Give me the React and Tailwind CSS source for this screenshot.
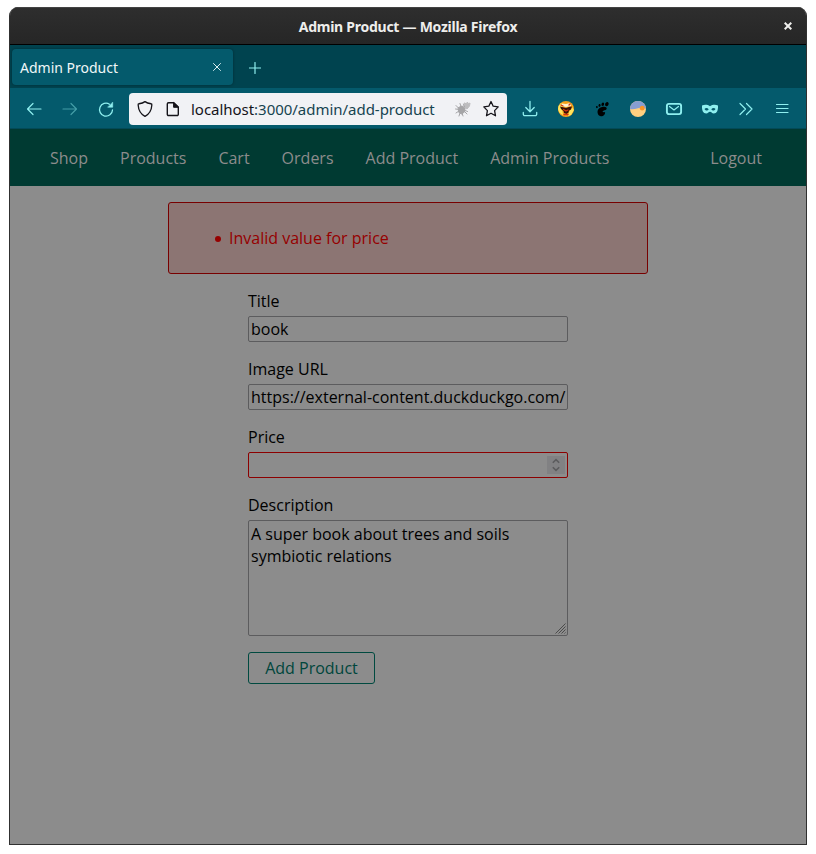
const stroke = { fill: 'none', stroke: 'currentColor', strokeLinecap: 'round', strokeLinejoin: 'round' };

function Icon({ children, className = '', size = 18 }) {
  return (
    <svg width={size} height={size} viewBox={`0 0 ${size} ${size}`} className={`shrink-0 ${className}`} {...stroke} strokeWidth="1.2">
      {children}
    </svg>
  );
}

function TitleBar() {
  return (
    <div className="relative flex h-[38px] items-center justify-center border-b border-black bg-gradient-to-b from-[#2e2e2e] to-[#262626] pt-[2px] shadow-[inset_0_1px_0_#434343]">
      <span className="text-[14px] font-bold leading-5 tracking-[-0.26px] text-[#eeeeec]">Admin Product — Mozilla Firefox</span>
      <svg className="absolute right-[14px] top-[15px]" width="8" height="8" viewBox="0 0 8 8" fill="none" stroke="#eeeeec" strokeWidth="2">
        <path d="M.7.7 7.3 7.3M7.3.7.7 7.3" />
      </svg>
    </div>
  );
}

function TabStrip() {
  return (
    <div className="flex h-[43px] items-start bg-[#00434f] pl-[2px] pt-1">
      <div className="flex h-9 w-[221px] items-center justify-between rounded bg-[#045a6c] pl-2 pr-3 shadow-[0_0_3px_rgba(0,0,0,0.35)]">
        <span className="pt-[2px] text-[14px] leading-5 text-[#f0f7f8]">Admin Product</span>
        <svg width="8" height="8" viewBox="0 0 8 8" className="text-[#d9eef0]" {...stroke} strokeWidth="1">
          <path d="M.5.5l7 7M7.5.5l-7 7" />
        </svg>
      </div>
      <svg width="12" height="12" viewBox="0 0 12 12" className="ml-4 mt-[13px] text-[#8fefef]" {...stroke} strokeWidth="1.2">
        <path d="M6 .5v11M.5 6h11" />
      </svg>
    </div>
  );
}

function AddressBar() {
  return (
    <div className="ml-[14px] flex h-8 w-[378px] items-center rounded bg-[#f1f2f5] pl-[7px] pr-[7px] text-[#15141a]">
      <Icon className="scale-95">
        <path strokeWidth="1.4" d="M9 1.2c1.600 1.100 3.400 1.800 6.300 2.300.8.1 1 .5.9 1.300-.3 5.100-2.400 9.400-7.200 12-4.800-2.600-6.900-6.900-7.200-12-.1-.8.1-1.200.9-1.300C5.600 3 7.400 2.300 9 1.200z" />
      </Icon>
      <Icon className="ml-[10px]">
        <path strokeWidth="1.4" d="M4.500 2.700h5.300l4.500 4.200v7.400a1.200 1.200 0 0 1-1.200 1.200H4.500a1.200 1.200 0 0 1-1.200-1.200V3.900a1.200 1.200 0 0 1 1.200-1.200z" />
        <path fill="currentColor" strokeWidth="1" d="M9.600 2.800v4.500h4.600z" />
      </Icon>
      <span className="ml-[9px] whitespace-nowrap text-[15px] leading-5 tracking-[-0.03px]">
        localhost<span className="text-[#164450]">:3000/admin/add-product</span>
      </span>
      <svg width="16" height="16" viewBox="0 0 16 16" className="ml-auto text-[#a5a5a7]" {...stroke} strokeWidth="1">
        <path fill="currentColor" d="M3.500 6.500 7 5l3 2-.5 4-3 2-2.500-1.500z" />
        <path fill="#bdbdbf" stroke="#bdbdbf" d="m10 2 1 1 1.500-2 .5 2 2-1-.5 3-2.500 3-3-2z" />
        <path d="M1 4.500l3 3M.5 8l4 .5M1 12l3-2M4 15l1-3M8 15l-1-3M12 13l-3-3M12.500 10.500 9 9M5 2.500l1 3M8.500 3l1 3" />
      </svg>
      <svg width="18" height="18" viewBox="0 0 18 18" className="ml-[11px]" {...stroke} strokeWidth="1.3">
        <path d="m9 1.500 2.200 4.700 5 .7-3.600 3.700.9 5.200L9 13.300l-4.500 2.500.9-5.200L1.800 6.900l5-.7z" />
      </svg>
    </div>
  );
}

function Toolbar() {
  return (
    <div className="flex h-[41px] items-center border-b border-[#034a58] bg-[#045a6c] pl-[15px] pt-[2px] text-[#8fefef]">
      <Icon>
        <path d="M16 9H2.500M8 3.500 2.500 9 8 14.500" />
      </Icon>
      <Icon className="ml-[18px] opacity-45">
        <path d="M2 9h13.500M10 3.500 15.500 9 10 14.500" />
      </Icon>
      <Icon className="ml-[18px]">
        <path strokeWidth="1.3" d="M12.500 4.200A6.500 6.500 0 1 0 15.500 10" />
        <path fill="currentColor" strokeWidth=".6" d="M15.700 2.500v4.700H11z" />
      </Icon>
      <AddressBar />
      <Icon className="ml-[14px]">
        <path strokeWidth="1.3" d="M9 1.500v10M4.800 7.500 9 11.700l4.200-4.200M2.300 12.500v1.700a1.500 1.500 0 0 0 1.500 1.500h10.400a1.500 1.500 0 0 0 1.500-1.500v-1.700" />
      </Icon>
      <Icon className="ml-[18px]">
        <circle cx="9" cy="9" r="8" fill="#f7a11a" stroke="none" />
        <path fill="#ffe45c" stroke="none" d="M1 9a8 8 0 0 1 3-6l3 3-2 2 1 7a8 8 0 0 1-5-6zM15 7l2 3-3 5-3 1 1-4z" />
        <path fill="#fff3d0" stroke="none" d="M5 3.500 9 4l4-1 1 3-5 1-4-1z" />
        <path fill="#3a1205" stroke="none" d="m3 6.500 4 1 2 .5 3-1 3-.5-1 3-2 1-.5 2-2 1.500L7 13l-.5-2L4 9z" />
        <path stroke="#d63212" strokeWidth="1.3" d="M6.500 9.500 9 11l2-1M7 14.500h4M4 5l2 1M12 5l1-1" />
      </Icon>
      <Icon className="ml-[18px] text-black">
        <path fill="currentColor" stroke="none" d="M14.300 2c2 0 1.800 4.200-.7 4.200S12 2 14.300 2zM10 2.600c1.700 0 1.500 3.500-.4 3.500S8.500 2.600 10 2.600zM6.500 4c1.500 0 1.500 2.800 0 2.800S5.300 4 6.500 4zM3.800 6c1.200 0 1.400 2.200.2 2.200S2.600 6 3.800 6zM9 7c3.500-.8 5.500.5 4.500 2.300-.8 1.500-3.200.8-3.800 2-.4 1 1.300 1 2.300.6.6 2-1.600 4.600-4.200 4.400C4 16 2.400 8.500 9 7z" />
      </Icon>
      <Icon className="ml-[18px]">
        <circle cx="9" cy="9" r="8" fill="#ffd080" stroke="none" />
        <path fill="#879ed2" stroke="none" d="M1 9a8 8 0 0 1 16 0c-2-2-5-1.700-8-.8S3 9.500 1 9z" />
        <circle cx="13.200" cy="8.200" r="2.400" fill="#f99527" stroke="none" />
      </Icon>
      <Icon className="ml-[18px]">
        <rect x="1.900" y="3.900" width="14.200" height="10.200" rx="2" strokeWidth="1.900" />
        <path strokeWidth="1.200" d="m4.500 6.500 4.500 3.500 4.500-3.500" />
      </Icon>
      <Icon className="ml-[18px]">
        <path fill="currentColor" stroke="none" fillRule="evenodd" d="M1 5.500c2.500-1 5.500-1 8 .8 2.500-1.800 5.500-1.800 8-.8.300 5-1.200 8-4.200 8-1.800 0-2.600-1.700-3.800-1.700S7 13.500 5.200 13.500C2.200 13.500.7 10.500 1 5.500zM3.500 9c1.300 2 3.300 2 4.200.3C6.500 7.600 4.500 7.600 3.500 9zm6.800.3c.9 1.700 2.900 1.700 4.200-.3-1-1.400-3-1.400-4.200.3z" />
      </Icon>
      <Icon className="ml-[18px]">
        <path d="m3 3.500 5.500 5.500L3 14.500M9.500 3.500 15 9l-5.500 5.500" />
      </Icon>
      <Icon className="ml-[18px]">
        <path d="M3.500 4.500h11.500M3.500 8.500h11.500M3.500 12.500h11.500" />
      </Icon>
    </div>
  );
}

const links = ['Shop', 'Products', 'Cart', 'Orders', 'Add Product', 'Admin Products'];

function Navigation() {
  return (
    <nav className="flex h-[57px] items-center gap-8 bg-[#003a32] pl-10 pr-[44px] pt-px text-[#8c8c8c]">
      {links.map((link) => (
        <a key={link}>{link}</a>
      ))}
      <a className="ml-auto">Logout</a>
    </nav>
  );
}

function Field({ label, children }) {
  return (
    <div className="mb-4">
      <label className="mb-1 block h-[22px] leading-[22px]">{label}</label>
      {children}
    </div>
  );
}

export default function App() {
  return (
    <div className="h-[854px] w-[816px] overflow-hidden bg-white pl-[9px] pt-[7px] font-['Noto_Sans',sans-serif]">
      <div className="flex h-[838px] w-[798px] flex-col overflow-hidden rounded-t-[9px] border border-t-0 border-[#303030] bg-[#8c8c8c]">
        <div className="shrink-0">
          <TitleBar />
          <TabStrip />
          <Toolbar />
        </div>
        <div className="flex-1 font-['Open_Sans',sans-serif] text-[16px] leading-[22px] text-black">
          <Navigation />
          <main className="pt-4">
            <div className="mx-auto flex h-[72px] w-[480px] items-center rounded-[3px] border border-[#780000] bg-[#8c7573] pl-[46px] text-[#960000]">
              <span className="mr-[8px] mt-[2px] h-[6px] w-[6px] rounded-full bg-[#960000]" />
              <span>Invalid value for price</span>
            </div>
            <form className="mx-auto mt-4 w-80">
              <Field label="Title">
                <div className="flex h-[26px] items-center rounded-[2px] border border-[#5c5c5e] px-[2px]">book</div>
              </Field>
              <Field label="Image URL">
                <div className="flex h-[26px] items-center overflow-hidden whitespace-nowrap rounded-[2px] border border-[#5c5c5e] px-[2px]">
                  https://external-content.duckduckgo.com/
                </div>
              </Field>
              <Field label="Price">
                <div className="flex h-[26px] items-center justify-end rounded-[2px] border border-[#8c0000] pr-[2px]">
                  <div className="flex h-[18px] w-[18px] items-center justify-center bg-[#818183]">
                    <svg width="8" height="14" viewBox="0 0 8 14" fill="none" stroke="#5b5b5d" strokeWidth="1.5">
                      <path d="M.8 4.800 4 1.600l3.200 3.200M.8 9.200 4 12.400l3.200-3.200" />
                    </svg>
                  </div>
                </div>
              </Field>
              <Field label="Description">
                <div className="relative h-[116px] rounded-[2px] border border-[#5c5c5e] px-[2px] pt-[2px]">
                  A super book about trees and soils symbiotic relations
                  <svg className="absolute bottom-[1px] right-[1px]" width="11" height="11" viewBox="0 0 11 11" fill="none" stroke="#4b4b4b">
                    <path d="M.5 10.500l10-10M3.500 10.500l7-7M6.500 10.500l4-4M9.500 10.500l1-1" />
                  </svg>
                </div>
              </Field>
              <button type="button" className="block h-8 w-[127px] rounded-[3px] border border-[#004a40] text-[#00463c]">
                Add Product
              </button>
            </form>
          </main>
        </div>
      </div>
    </div>
  );
}
